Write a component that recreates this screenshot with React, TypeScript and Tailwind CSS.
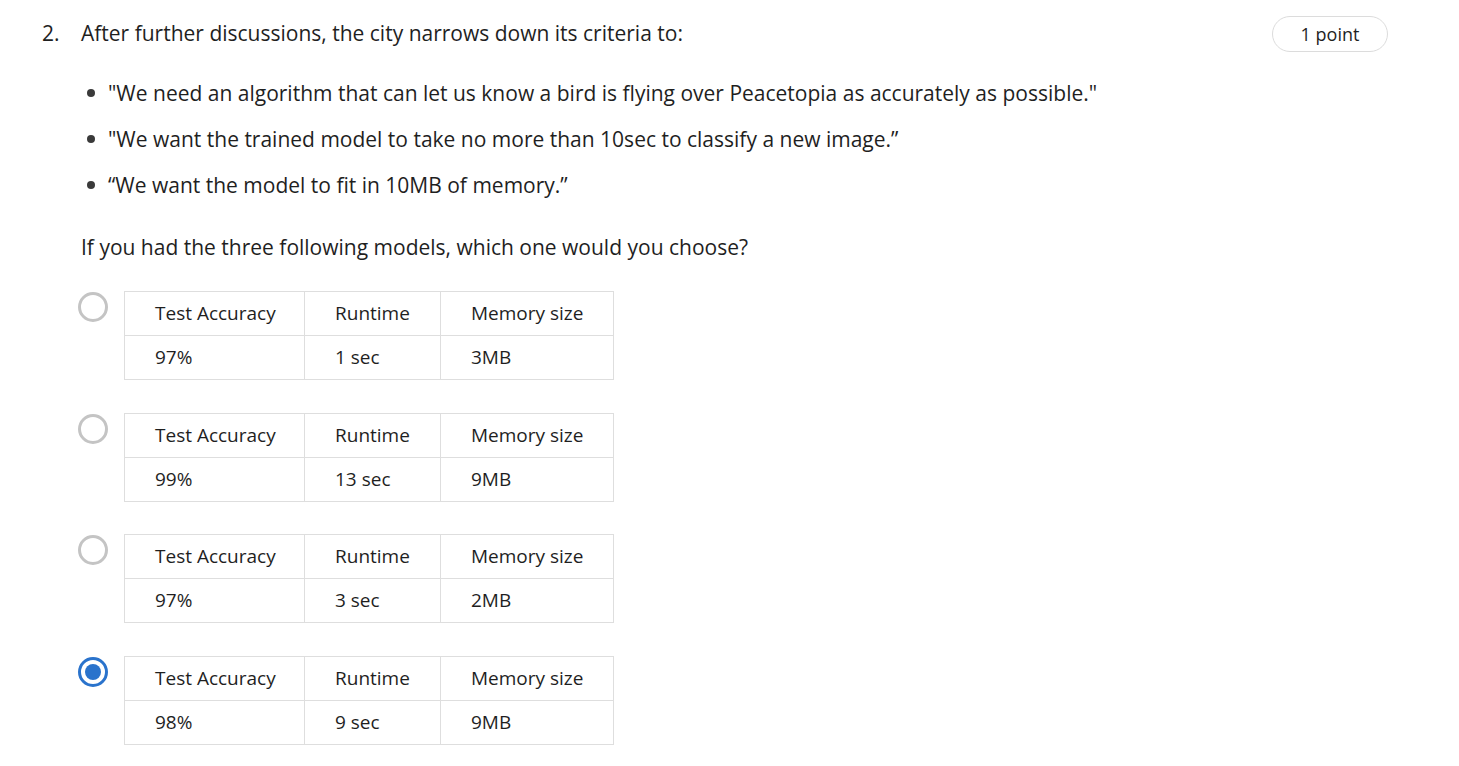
import React from "react";

const options = [
  { acc: "97%", rt: "1 sec", mem: "3MB", sel: false },
  { acc: "99%", rt: "13 sec", mem: "9MB", sel: false },
  { acc: "97%", rt: "3 sec", mem: "2MB", sel: false },
  { acc: "98%", rt: "9 sec", mem: "9MB", sel: true },
];

function Radio({ sel }: { sel: boolean }) {
  if (sel) {
    return (
      <div className="w-[30px] h-[30px] rounded-full border-[3px] border-[#2a73cc] flex items-center justify-center bg-white">
        <div className="w-[16px] h-[16px] rounded-full bg-[#2a73cc]" />
      </div>
    );
  }
  return <div className="w-[30px] h-[30px] rounded-full border-[3px] border-[#c4c4c4] bg-white" />;
}

function Table({ acc, rt, mem }: { acc: string; rt: string; mem: string }) {
  const cell = "border border-[#dedede] h-[44px] pl-[30px] text-left align-middle font-normal";
  return (
    <table className="border-collapse text-[19px] text-[#1f1f1f]">
      <tbody>
        <tr>
          <td className={cell + " w-[180px]"}>Test Accuracy</td>
          <td className={cell + " w-[136px]"}>Runtime</td>
          <td className={cell + " w-[173px]"}>Memory size</td>
        </tr>
        <tr>
          <td className={cell}>{acc}</td>
          <td className={cell}>{rt}</td>
          <td className={cell}>{mem}</td>
        </tr>
      </tbody>
    </table>
  );
}

export default function App() {
  return (
    <div
      className="w-[1459px] h-[766px] bg-white text-[#1f1f1f] overflow-hidden"
      style={{ fontFamily: '"Open Sans", sans-serif' }}
    >
      <div className="flex pl-[42px] pt-[19px] pr-[71px]">
        <div className="w-[39px] text-[21px] leading-[28px]">2.</div>
        <div className="flex-1">
          <div className="flex items-start justify-between">
            <div className="text-[21px] leading-[28px]">
              After further discussions, the city narrows down its criteria to:
            </div>
            <div className="mt-[-3px] h-[36px] w-[116px] rounded-full border border-[#dcdcdc] flex items-center justify-center text-[18px]">
              1 point
            </div>
          </div>
          <ul className="mt-[27px] ml-[6px] flex flex-col gap-[18px] text-[21px] leading-[28px]">
            {[
              "\"We need an algorithm that can let us know a bird is flying over Peacetopia as accurately as possible.\"",
              "\"We want the trained model to take no more than 10sec to classify a new image.\u201d",
              "\u201cWe want the model to fit in 10MB of memory.\u201d",
            ].map((t, i) => (
              <li key={i} className="flex items-center">
                <span className="w-[8px] h-[8px] rounded-full bg-[#3a3a3a] mr-[13px]" />
                <span>{t}</span>
              </li>
            ))}
          </ul>
          <div className="mt-[34px] text-[21px] leading-[28px]">
            If you had the three following models, which one would you choose?
          </div>
          <div className="mt-[30px] ml-[-3px] flex flex-col gap-[32.5px]">
            {options.map((o, i) => (
              <div key={i} className="flex items-start">
                <div className="pt-[1px] w-[46px]">
                  <Radio sel={o.sel} />
                </div>
                <Table acc={o.acc} rt={o.rt} mem={o.mem} />
              </div>
            ))}
          </div>
        </div>
      </div>
    </div>
  );
}
